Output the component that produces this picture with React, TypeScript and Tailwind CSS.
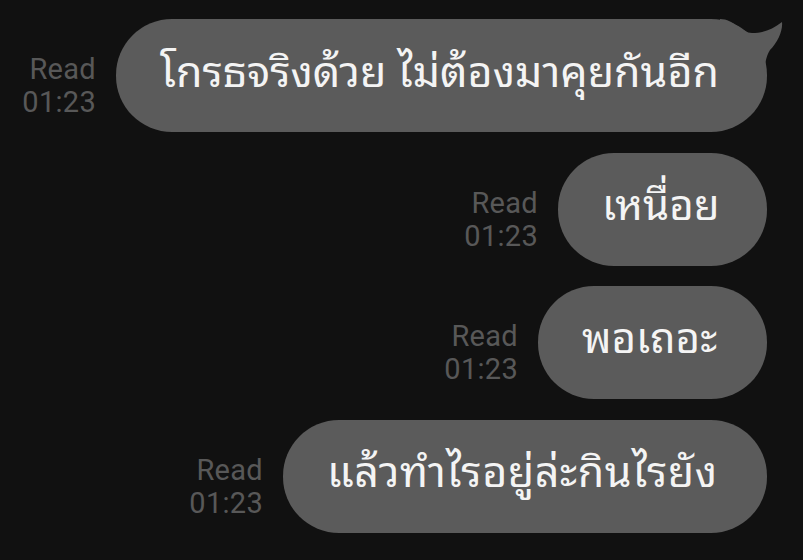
import React from "react";

const msgs = [
  { text: "โกรธจริงด้วย ไม่ต้องมาคุยกันอีก", tail: true, w: "w-[651px]", size: "text-[43px]" },
  { text: "เหนื่อย", tail: false, w: "w-[209px]", size: "text-[42px]" },
  { text: "พอเถอะ", tail: false, w: "w-[229px]", size: "text-[42px]" },
  { text: "แล้วทำไรอยู่ล่ะกินไรยัง", tail: false, w: "w-[484px]", size: "text-[43px] tracking-[0.5px]" },
];

export default function App() {
  return (
    <div
      className="w-[803px] h-[560px] bg-[#111111] overflow-hidden flex flex-col items-end gap-[20.6px] pt-[19px] pr-[36px]"
      style={{ fontFamily: '"Noto Sans Thai Looped", "Noto Sans Thai", "Noto Sans", sans-serif' }}
    >
      {msgs.map((m, i) => (
        <div key={i} className="flex items-end gap-[20px]">
          <div
            className="flex flex-col items-end text-[29px] leading-[33px] tracking-[0.3px] text-[#585858] mb-[13px]"
            style={{ fontFamily: '"Roboto", "Liberation Sans", sans-serif' }}
          >
            <span>Read</span>
            <span>01:23</span>
          </div>
          <div className={`relative h-[113px] rounded-[56px] bg-[#5b5b5b] flex items-center pl-[44px] ${m.w}`}>
            <span className={`${m.size} text-[#f4f4f4] whitespace-nowrap leading-none pb-[17px]`}>{m.text}</span>
            {m.tail && (
              <svg
                className="absolute right-[-36px] top-[-19px]"
                width="103"
                height="80"
                viewBox="0 0 103 80"
              >
                <path
                  d="M20 19 C34 19 42 33 52 33 C62 33 72 30 82 22 C83 30 78 42 70 50 C66 56 64 66 64 80 L20 80 Z"
                  fill="#5b5b5b"
                />
              </svg>
            )}
          </div>
        </div>
      ))}
    </div>
  );
}
